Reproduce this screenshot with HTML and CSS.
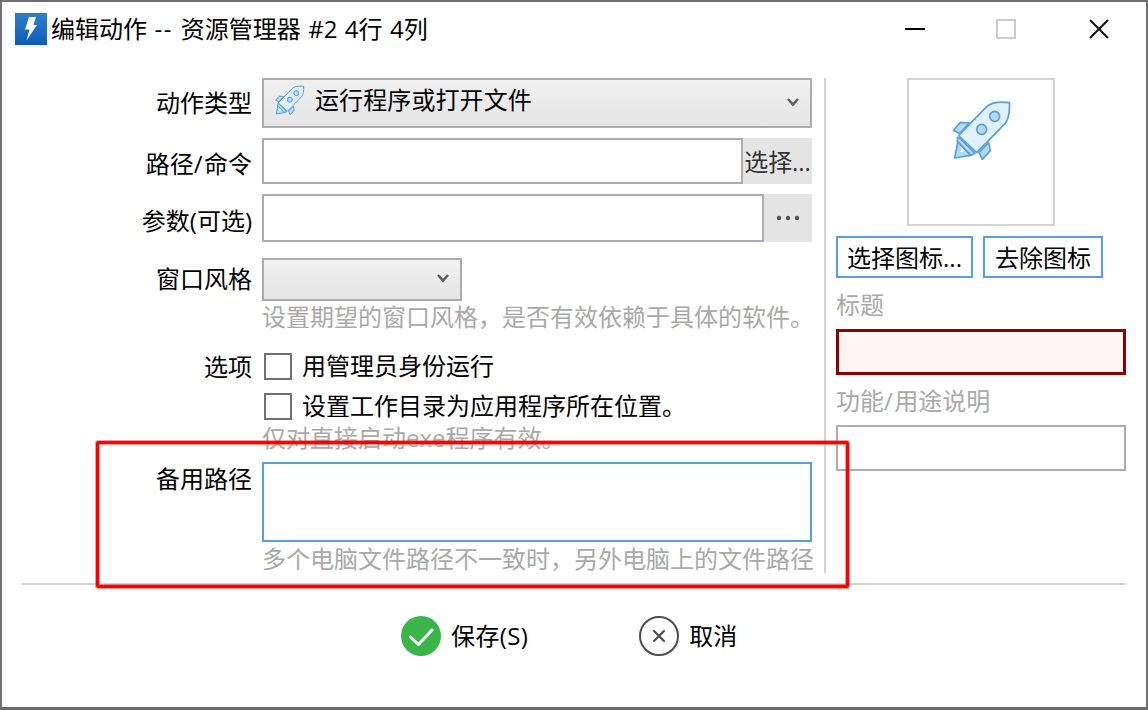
FILE: index.html
```html
<!DOCTYPE html>
<html lang="zh-CN">
<head>
    <meta charset="UTF-8">
    <meta name="viewport" content="width=device-width, initial-scale=1.0">
    <title>编辑动作</title>
    <link rel="stylesheet" href="styles.css">
</head>
<body>
    <svg class="symbols">
        <symbol id="rocket" viewBox="36 30 180 180">
            <path class="fin" d="M40 121 L61 97 L88 99 L59 131 Z"/>
            <path class="fin" d="M146 158 L151 182 L127 208 L117 187 Z"/>
            <path class="fin" d="M54 151 L44 204 L91 196 Z"/>
            <path class="flame" d="M65 172 L62 186 L76 182 Z"/>
            <path class="fin" d="M53 142 L60 145 L105 190 L93 196 L52 154 Z"/>
            <path class="hull" d="M59 133 L138 52 C152 38 178 34 208 38 C210 66 205 88 195 101 L110 188 L57 138 Z"/>
            <circle class="fin" cx="125" cy="118" r="15"/>
            <circle class="fin" cx="164" cy="79" r="15"/>
        </symbol>
    </svg>

    <div class="window">
        <header class="titlebar">
            <svg class="app-icon" viewBox="0 0 32 32">
                <defs>
                    <linearGradient id="appBg" x1="0" y1="0" x2="0" y2="1">
                        <stop offset="0" stop-color="#2f7fcb"/>
                        <stop offset="1" stop-color="#0a5db8"/>
                    </linearGradient>
                </defs>
                <rect width="32" height="32" fill="url(#appBg)"/>
                <path d="M14 4 L21 4 L18.500 12 L22 12 L11.500 27.500 L14.500 16.500 L10 16.500 Z" fill="#fff"/>
            </svg>
            <h1 class="title">编辑动作 <span class="dash">--</span> 资源管理器 #2 4行 4列</h1>
            <svg class="window-controls" viewBox="0 0 204 22">
                <path d="M0 11 H20" stroke="#000" stroke-width="2"/>
                <rect x="92" y="2" width="18" height="18" fill="none" stroke="#ccc" stroke-width="2"/>
                <path d="M185 2 L203 20 M203 2 L185 20" stroke="#111" stroke-width="2"/>
            </svg>
        </header>

        <main class="content">
            <form class="fields">
                <div class="row row-type">
                    <label class="label">动作类型</label>
                    <div class="combo combo-type">
                        <svg class="rocket-small"><use href="#rocket"/></svg>
                        <span class="combo-text">运行程序或打开文件</span>
                        <svg class="chevron" viewBox="0 0 12 10"><path d="M1 2 L6 7.500 L11 2"/></svg>
                    </div>
                </div>

                <div class="row row-path">
                    <label class="label" for="path">路径<span class="slash">/</span>命令</label>
                    <div class="input-group">
                        <input type="text" id="path">
                        <button type="button" class="addon addon-path">选择...</button>
                    </div>
                </div>

                <div class="row row-args">
                    <label class="label" for="args">参数(可选)</label>
                    <div class="input-group">
                        <input type="text" id="args">
                        <button type="button" class="addon addon-more">
                            <svg class="dots" viewBox="0 0 24 6">
                                <circle cx="3" cy="3" r="2.200"/>
                                <circle cx="12" cy="3" r="2.200"/>
                                <circle cx="21" cy="3" r="2.200"/>
                            </svg>
                        </button>
                    </div>
                </div>

                <div class="row row-style">
                    <label class="label">窗口风格</label>
                    <div>
                        <div class="combo combo-style">
                            <svg class="chevron" viewBox="0 0 12 10"><path d="M1 2 L6 7.500 L11 2"/></svg>
                        </div>
                        <p class="hint">设置期望的窗口风格，是否有效依赖于具体的软件。</p>
                    </div>
                </div>

                <div class="row row-options">
                    <span class="label">选项</span>
                    <div>
                        <label class="check"><input type="checkbox">用管理员身份运行</label>
                        <label class="check"><input type="checkbox">设置工作目录为应用程序所在位置。</label>
                        <p class="hint hint-exe">仅对直接启动exe程序有效。</p>
                    </div>
                </div>

                <div class="row row-backup">
                    <label class="label" for="backup">备用路径</label>
                    <div>
                        <textarea id="backup"></textarea>
                        <p class="hint">多个电脑文件路径不一致时，另外电脑上的文件路径</p>
                    </div>
                </div>
            </form>

            <aside class="side">
                <div class="preview">
                    <svg class="rocket-large"><use href="#rocket"/></svg>
                </div>
                <div class="icon-buttons">
                    <button type="button" class="outline pick">选择图标...</button>
                    <button type="button" class="outline remove">去除图标</button>
                </div>
                <label class="side-label" for="caption">标题</label>
                <input type="text" id="caption" class="invalid">
                <label class="side-label" for="desc">功能<span class="slash">/</span>用途说明</label>
                <input type="text" id="desc">
            </aside>
        </main>

        <footer class="actions">
            <button type="button" class="action save">
                <svg class="action-icon" viewBox="0 0 40 40">
                    <circle cx="20" cy="20" r="20" fill="#39b54a"/>
                    <path d="M9.500 21 L17.500 28.500 L31 14" fill="none" stroke="#fff" stroke-width="3" stroke-linecap="round" stroke-linejoin="round"/>
                </svg>
                保存(S)
            </button>
            <button type="button" class="action">
                <svg class="action-icon" viewBox="0 0 40 40">
                    <circle cx="20" cy="20" r="19" fill="none" stroke="#4d4d4d" stroke-width="2"/>
                    <path d="M15 15 L25 25 M25 15 L15 25" stroke="#4d4d4d" stroke-width="2.200" stroke-linecap="round"/>
                </svg>
                取消
            </button>
        </footer>

        <div class="highlight"></div>
    </div>
</body>
</html>
```
FILE: styles.css
```css
:root {
    --border: #acacac;
    --input-border: #abadb3;
    --accent: #569de5;
    --muted: #a9a9a9;
    --line: #d3d3d3;
}

* {
    box-sizing: border-box;
    margin: 0;
    padding: 0;
}

body, input, textarea, button {
    font-family: "Open Sans", "Noto Sans CJK SC", sans-serif;
    font-size: 24px;
    line-height: 32px;
    color: #000;
}

body {
    width: 1148px;
    height: 710px;
    overflow: hidden;
    background: #fff;
}

.symbols {
    display: none;
}

.window {
    position: relative;
    height: 710px;
    border: 2px solid #707070;
    border-bottom: 3px solid #6a6a6a;
    background: #fff;
}

/* Title bar */
.titlebar {
    display: flex;
    align-items: center;
    height: 54px;
    padding: 0 37px 0 13px;
}

.app-icon {
    width: 32px;
    height: 32px;
    margin-right: 4px;
}

.title {
    flex: 1;
    font-size: 24px;
    font-weight: 400;
    word-spacing: 1.2px;
    white-space: nowrap;
}

.dash {
    letter-spacing: 1.7px;
}

.window-controls {
    width: 204px;
    height: 22px;
    flex: none;
}

/* Main content */
.content {
    display: flex;
    height: 529px;
    margin: 0 20px;
    padding-top: 22px;
    border-bottom: 2px solid var(--line);
}

.fields {
    width: 804px;
    height: 495px;
    border-right: 2px solid var(--line);
}

.row {
    display: grid;
    grid-template-columns: 230px 550px;
    column-gap: 10px;
}

.label {
    text-align: right;
    white-space: nowrap;
}

.slash {
    letter-spacing: 1.5px;
}

.row-type { height: 60px; }
.row-path { height: 56px; }
.row-args { height: 64px; }
.row-style { height: 88px; }
.row-options { height: 116px; }

.row-type .label { padding-top: 9px; }
.row-path .label { padding-top: 10px; }
.row-args .label { padding-top: 11px; }
.row-style .label { padding-top: 5px; }
.row-options .label { padding-top: 5px; }
.row-backup .label { padding-top: 1px; }

.combo {
    display: flex;
    align-items: center;
    border: 2px solid var(--border);
    background: linear-gradient(#f0f0f0, #e5e5e5);
}

.combo-type {
    height: 50px;
    padding: 0 11px;
}

.combo-text {
    flex: 1;
    margin: -6px 0 0 10px;
    letter-spacing: 0.1px;
}

.combo-style {
    justify-content: flex-end;
    width: 200px;
    height: 43px;
    padding-right: 11px;
}

.chevron {
    width: 12px;
    height: 10px;
    margin-top: -2px;
    fill: none;
    stroke: #606060;
    stroke-width: 2.6;
}

.combo-style .chevron {
    margin-top: -4px;
}

.input-group {
    display: flex;
    height: 46px;
}

.row-args .input-group {
    height: 48px;
}

input[type="text"], textarea {
    display: block;
    width: 100%;
    min-width: 0;
    border: 2px solid var(--input-border);
    background: #fff;
    outline: none;
    resize: none;
}

.addon {
    display: flex;
    align-items: center;
    justify-content: center;
    flex: none;
    border: none;
    background: #e5e5e5;
    color: #333;
}

.addon-path {
    width: 69px;
    padding-top: 2px;
    letter-spacing: -0.1px;
}

.addon-more {
    width: 48px;
}

.dots {
    width: 24px;
    height: 6px;
    fill: #555;
}

.hint {
    color: var(--muted);
    white-space: nowrap;
}

.check {
    display: flex;
    align-items: center;
    height: 40px;
    padding-left: 2px;
    gap: 10px;
}

.check input {
    appearance: none;
    width: 28px;
    height: 27px;
    border: 2px solid #707070;
    background: #fff;
}

.hint-exe {
    margin-top: -4px;
}

.row-backup textarea {
    height: 80px;
    border-color: var(--accent);
}

.row-backup .hint {
    padding-top: 1px;
}

/* Icon and caption panel */
.side {
    width: 290px;
    margin-left: 10px;
}

.preview {
    width: 148px;
    height: 148px;
    margin: 0 0 10px 71px;
    padding: 20px 0 0 43px;
    border: 2px solid var(--line);
}

.rocket-large {
    display: block;
    width: 60px;
    height: 60px;
    stroke-width: 5;
}

.rocket-small {
    width: 30px;
    height: 30px;
    margin-top: -6px;
    stroke-width: 6;
}

.fin, .hull {
    stroke: #5b9fd9;
    stroke-linejoin: round;
}

.fin { fill: #b1d9fb; }
.hull { fill: #dff0fe; }
.flame { fill: #fff; }

.icon-buttons {
    display: flex;
    gap: 10px;
    margin-bottom: 10px;
}

.outline {
    height: 42px;
    padding-top: 1px;
    border: 2px solid var(--accent);
    background: #fff;
    white-space: nowrap;
}

.pick { width: 137px; }
.remove { width: 120px; }

.side-label {
    display: block;
    height: 41px;
    padding-top: 1px;
    color: var(--muted);
}

.side input[type="text"] {
    height: 46px;
    margin-bottom: 9px;
}

.side input.invalid {
    border: 3px solid #8b0000;
    background: #fff5f5;
}

/* Bottom actions */
.actions {
    display: flex;
    gap: 111px;
    padding: 31px 0 0 399px;
}

.action {
    display: flex;
    align-items: center;
    gap: 10px;
    border: none;
    background: none;
}

.save {
    letter-spacing: 0.4px;
}

.action-icon {
    width: 40px;
    height: 40px;
}

/* Red frame drawn over the backup path row */
.highlight {
    position: absolute;
    left: 94px;
    top: 439px;
    width: 753px;
    height: 147px;
    border: 3px solid #f00;
    border-radius: 2px;
    box-shadow: 0 0 0 1px rgba(255, 0, 0, 0.4), inset 0 0 0 1px rgba(255, 0, 0, 0.4);
}
```
